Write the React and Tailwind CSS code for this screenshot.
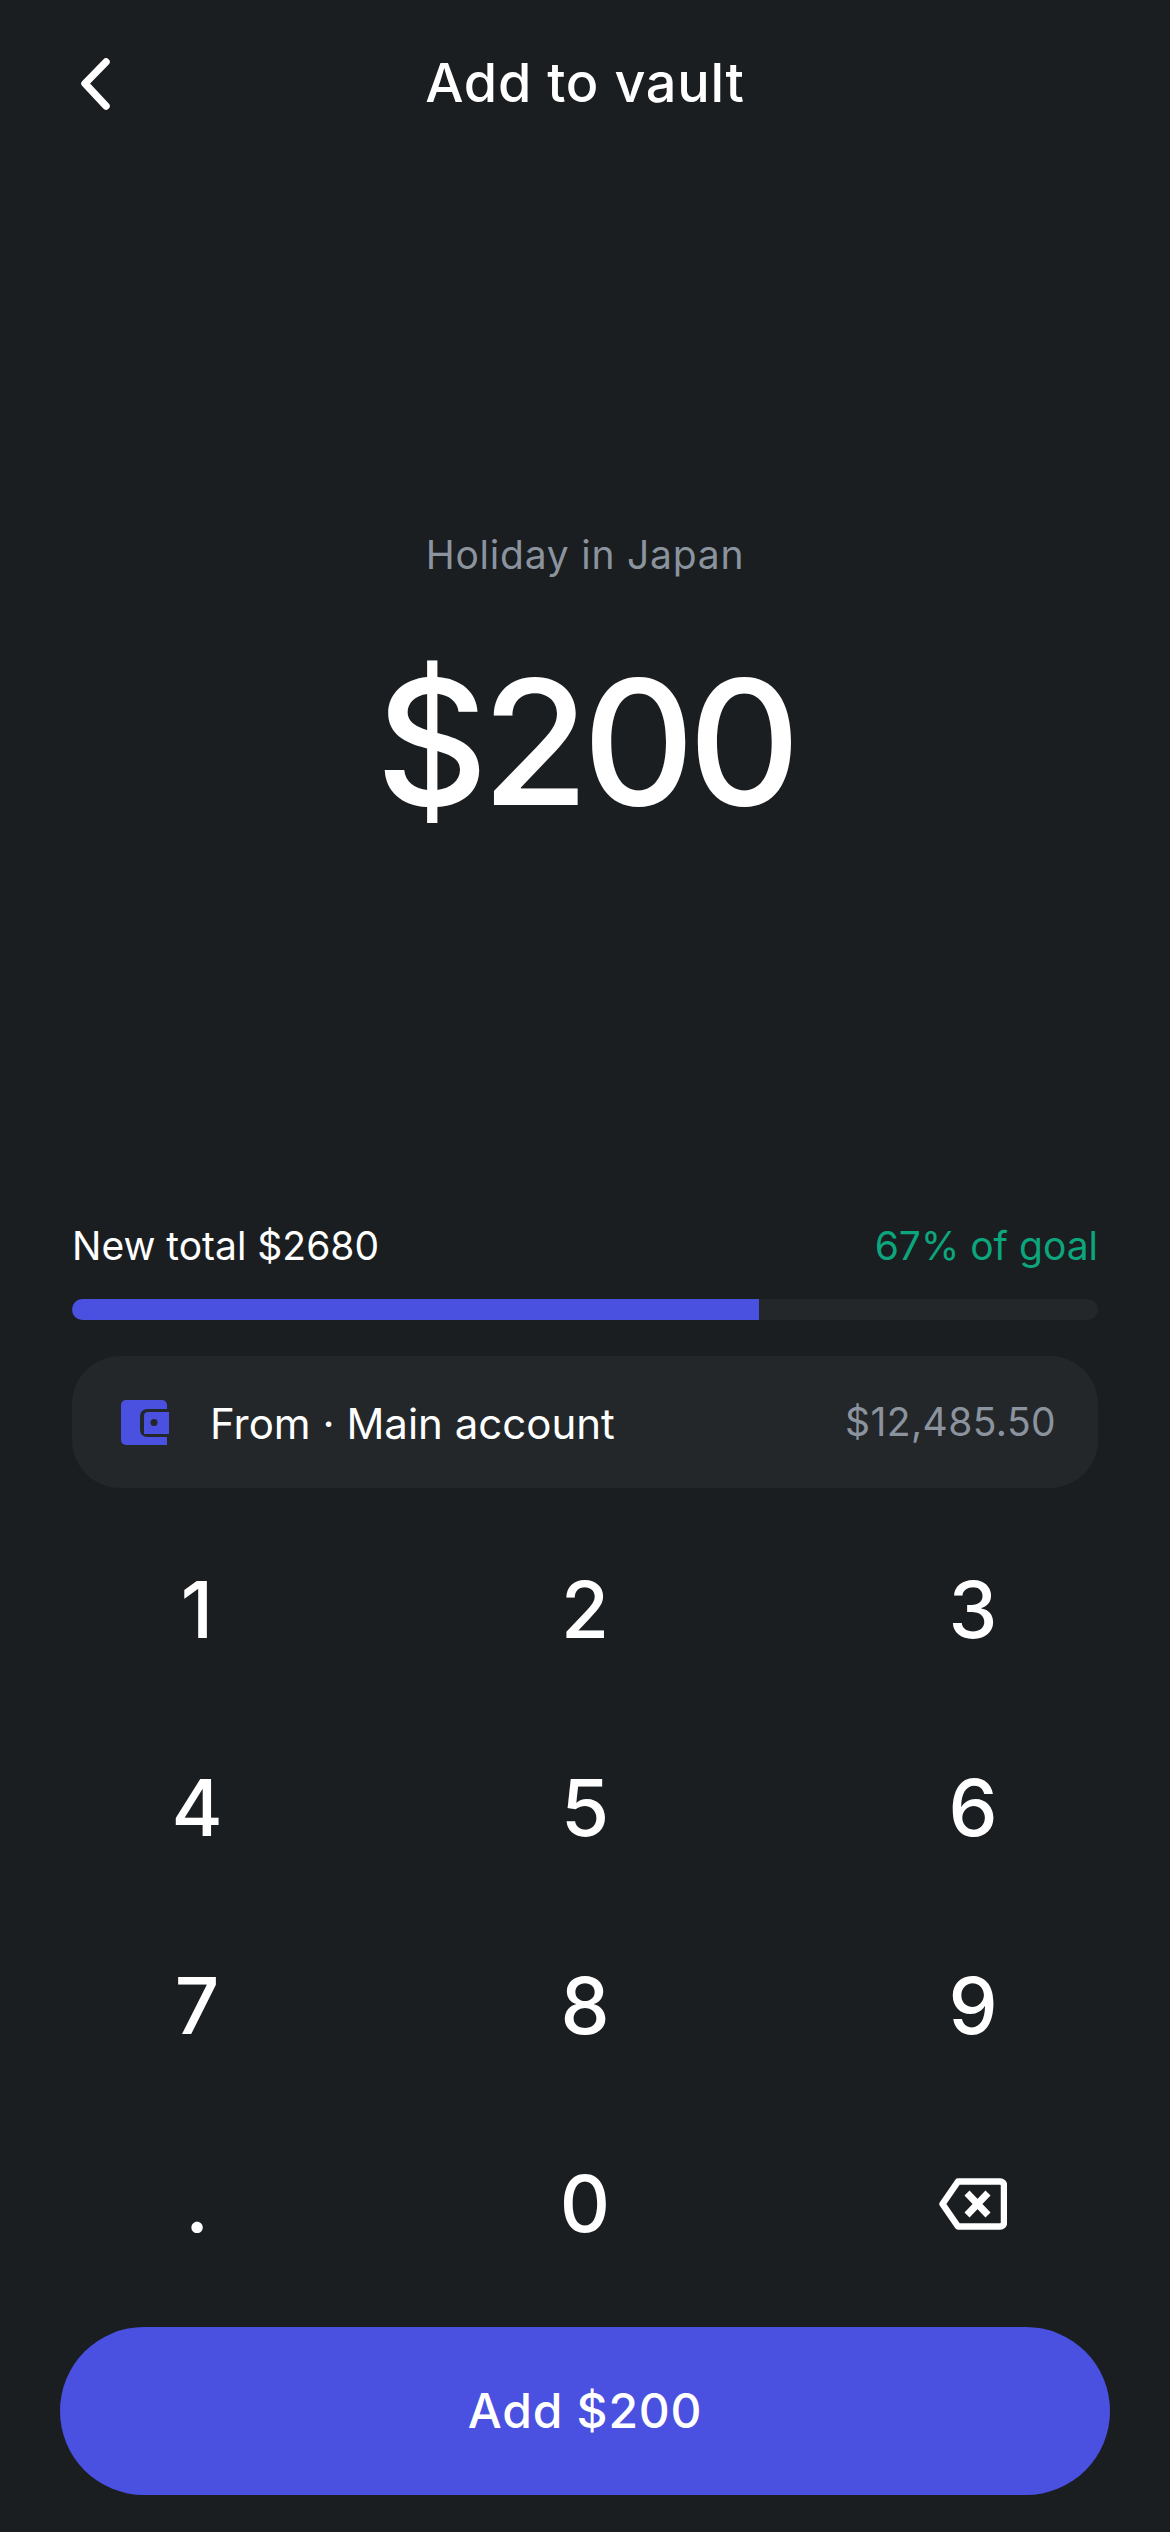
import { useState } from 'react';

const KEYS = ['1', '2', '3', '4', '5', '6', '7', '8', '9', '.', '0', 'back'];

function BackspaceIcon() {
  return (
    <svg viewBox="0 0 68 52" className="h-[52px] w-[68px]" fill="none" stroke="currentColor" strokeWidth={6.5} strokeLinejoin="round">
      <path d="M19 3.5h42a4 4 0 0 1 4 4v37a4 4 0 0 1-4 4H19L3.5 26Z" />
      <path d="M28 15l21 22M49 15L28 37" strokeWidth={7} />
    </svg>
  );
}

function WalletIcon() {
  return (
    <svg viewBox="0 0 48 45" className="h-[45px] w-[48px]">
      <path d="M5 0h36a5 5 0 0 1 5 5v40H5a5 5 0 0 1-5-5V5a5 5 0 0 1 5-5Z" fill="#4a50e0" />
      <path d="M48 9H26a7 7 0 0 0-7 7v14a7 7 0 0 0 7 7h22Z" fill="#23272a" />
      <path d="M48 12H27a4 4 0 0 0-4 4v18h25Z" fill="#4a50e0" />
      <circle cx="33" cy="22.5" r="3.5" fill="#23272a" />
    </svg>
  );
}

export default function App() {
  const [amount] = useState(200);

  return (
    <div className="flex h-[2532px] w-[1170px] flex-col overflow-hidden bg-[#1a1e21] text-white" style={{ fontFamily: 'Inter, sans-serif' }}>
      <header className="relative flex h-[166px] items-center justify-center">
        <button className="absolute left-[72px] top-[52px] text-white">
          <svg viewBox="0 0 48 60" className="h-[60px] w-[48px]" fill="none" stroke="currentColor" strokeWidth={7.5} strokeLinecap="round" strokeLinejoin="round">
            <path d="M34 10L13 31.5 34 54" />
          </svg>
        </button>
        <h1 className="text-[54px] font-[450] leading-[66px] tracking-[0.75px]">Add to vault</h1>
      </header>

      <section className="flex h-[1056px] flex-col items-center pt-[360px]">
        <p className="text-[39px] leading-[58px] tracking-[0.78px] text-[#8b949e]">Holiday in Japan</p>
        <p className="mt-[42px] text-[174px] font-[550] leading-[232px] tracking-[-6.5px]">${amount}</p>
      </section>

      <section className="px-[72px]">
        <div className="flex items-center justify-between text-[39px] leading-[48px]">
          <span>New total $2680</span>
          <span className="text-[#0ca57c]">67% of goal</span>
        </div>
        <div className="mt-[29px] h-[21px] overflow-hidden rounded-full bg-[#23272a]">
          <div className="h-full w-[67%] bg-[#4a50e0]" />
        </div>
        <div className="mt-[36px] flex h-[132px] items-center justify-between rounded-[48px] bg-[#23272a] pl-[49px] pr-[42px]">
          <div className="flex items-center gap-[41px]">
            <WalletIcon />
            <span className="mt-[2px] text-[42px]">From · Main account</span>
          </div>
          <span className="text-[39px] tracking-[0.4px] text-[#8b949e]">$12,485.50</span>
        </div>
      </section>

      <section className="mt-[23px] grid grid-cols-3 px-[3px]">
        {KEYS.map((key) => (
          <div key={key} className="flex h-[198px] items-center justify-center text-[78px] font-[450] leading-none">
            {key === 'back' ? <BackspaceIcon /> : key}
          </div>
        ))}
      </section>

      <div className="mt-auto px-[60px] pb-[37px]">
        <button className="h-[168px] w-full rounded-full bg-[#4a50e0] text-[48px] font-[450] tracking-[0.75px]">Add ${amount}</button>
      </div>
    </div>
  );
}
